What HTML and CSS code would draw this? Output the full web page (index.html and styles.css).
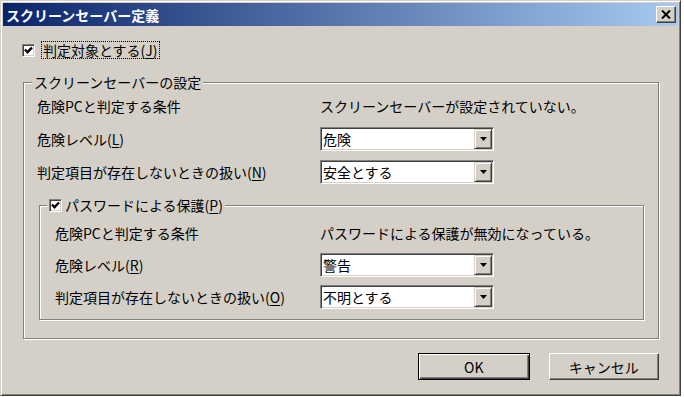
FILE: index.html
```html
<!DOCTYPE html>
<html lang="ja">
<head>
    <meta charset="UTF-8">
    <title>スクリーンセーバー定義</title>
    <link rel="stylesheet" href="styles.css">
</head>
<body>

    <!-- dialog start -->
    <div class="window">
        <div class="titlebar">
            <span>スクリーンセーバー定義</span>
            <div class="close">
                <svg width="10" height="9" viewBox="0 0 10 9"><path d="M1 0.5 L9 8.5 M9 0.5 L1 8.5" stroke="#000" stroke-width="2"/></svg>
            </div>
        </div>

        <div class="content">
            <div class="check-row">
                <span class="box">
                    <svg width="9" height="9" viewBox="0 0 9 9"><polyline points="1,3.5 3.5,6.2 8,1.5" fill="none" stroke="#000" stroke-width="2.4"/></svg>
                </span>
                <span class="focus">判定対象とする(<u>J</u>)</span>
            </div>

            <fieldset class="group outer">
                <legend>スクリーンセーバーの設定</legend>
                <div class="rows">
                    <div class="row">
                        <span class="lbl">危険PCと判定する条件</span>
                        <span>スクリーンセーバーが設定されていない。</span>
                    </div>
                    <div class="row">
                        <span class="lbl">危険レベル(<u>L</u>)</span>
                        <div class="combo"><span>危険</span><span class="drop"><svg width="7" height="4" viewBox="0 0 7 4"><polygon points="0,0 7,0 3.5,4" fill="#000"/></svg></span></div>
                    </div>
                    <div class="row">
                        <span class="lbl">判定項目が存在しないときの扱い(<u>N</u>)</span>
                        <div class="combo"><span>安全とする</span><span class="drop"><svg width="7" height="4" viewBox="0 0 7 4"><polygon points="0,0 7,0 3.5,4" fill="#000"/></svg></span></div>
                    </div>

                    <fieldset class="group inner">
                        <legend>
                            <span class="box">
                                <svg width="9" height="9" viewBox="0 0 9 9"><polyline points="1,3.5 3.5,6.2 8,1.5" fill="none" stroke="#000" stroke-width="2.4"/></svg>
                            </span>
                            <span>パスワードによる保護(<u>P</u>)</span>
                        </legend>
                        <div class="rows">
                            <div class="row">
                                <span class="lbl">危険PCと判定する条件</span>
                                <span>パスワードによる保護が無効になっている。</span>
                            </div>
                            <div class="row">
                                <span class="lbl">危険レベル(<u>R</u>)</span>
                                <div class="combo"><span>警告</span><span class="drop"><svg width="7" height="4" viewBox="0 0 7 4"><polygon points="0,0 7,0 3.5,4" fill="#000"/></svg></span></div>
                            </div>
                            <div class="row">
                                <span class="lbl">判定項目が存在しないときの扱い(<u>O</u>)</span>
                                <div class="combo"><span>不明とする</span><span class="drop"><svg width="7" height="4" viewBox="0 0 7 4"><polygon points="0,0 7,0 3.5,4" fill="#000"/></svg></span></div>
                            </div>
                        </div>
                    </fieldset>
                </div>
            </fieldset>

            <div class="buttons">
                <button class="btn default">OK</button>
                <button class="btn cancel">キャンセル</button>
            </div>
        </div>
    </div>
    <!-- dialog end -->

</body>
</html>
```

FILE: styles.css
```css
* {
    padding: 0;
    margin: 0;
    box-sizing: border-box;
}

body {
    background-color: #fff;
    font-family: "Noto Sans CJK JP", "Noto Sans", sans-serif;
    font-size: 14px;
    line-height: 16px;
    color: #000;
}

u {
    text-underline-offset: 2px;
}

.window {
    width: 681px;
    height: 396px;
    background-color: #d4d0c8;
    border: 1px solid;
    border-color: #d4d0c8 #404040 #404040 #d4d0c8;
    box-shadow: inset 1px 1px #fff, inset -1px -1px #808080;
    padding: 2px;
}

.titlebar {
    height: 23px;
    display: flex;
    align-items: center;
    justify-content: space-between;
    padding: 0 2px 0 3px;
    background: linear-gradient(to right, #0a246a, #a6caf0);
    color: #fff;
    font-weight: bold;
}

.close {
    width: 20px;
    height: 17px;
    display: flex;
    align-items: center;
    justify-content: center;
    background-color: #d4d0c8;
    border: 1px solid;
    border-color: #fff #404040 #404040 #fff;
    box-shadow: inset -1px -1px #808080;
}

.content {
    padding: 0 19px;
}

.box {
    width: 13px;
    height: 13px;
    display: flex;
    align-items: center;
    justify-content: center;
    background-color: #fff;
    border: 1px solid;
    border-color: #808080 #fff #fff #808080;
    box-shadow: inset 1px 1px #404040, inset -1px -1px #d4d0c8;
}

.check-row {
    height: 16px;
    margin-top: 16px;
    display: flex;
    align-items: center;
    gap: 7px;

    .focus {
        outline: 1px dotted #000;
        padding: 0 1px;
    }
}

.group {
    border: 1px solid #808080;
    box-shadow: inset 1px 1px #fff, 1px 1px #fff;
    padding: 0;

    legend {
        padding: 0 2px;
        line-height: 16px;
        background-color: #d4d0c8;
    }
}

.outer {
    width: 636px;
    height: 265px;
    margin: 16px 0 0 1px;

    legend {
        margin-left: 8px;
    }

    > .rows {
        padding: 4px 0 0 13px;
        gap: 9px;
    }

    .lbl {
        width: 283px;
    }
}

.inner {
    width: 605px;
    height: 123px;
    margin: 4px 0 0 2px;

    legend {
        margin-left: 7px;
        display: flex;
        align-items: center;
        gap: 3px;
    }

    .rows {
        padding: 8px 0 0 15px;
        gap: 8px;
    }

    .lbl {
        width: 265px;
    }
}

.rows {
    display: flex;
    flex-direction: column;
}

.row {
    height: 24px;
    display: flex;
    align-items: center;
}

.combo {
    width: 174px;
    height: 24px;
    display: flex;
    align-items: center;
    justify-content: space-between;
    padding: 0 0 0 2px;
    background-color: #fff;
    border: 1px solid;
    border-color: #808080 #fff #fff #808080;
    box-shadow: inset 1px 1px #404040, inset -1px -1px #d4d0c8;

    .drop {
        width: 18px;
        height: 20px;
        margin-right: 1px;
        display: flex;
        align-items: center;
        justify-content: center;
        background-color: #d4d0c8;
        border: 1px solid;
        border-color: #d4d0c8 #404040 #404040 #d4d0c8;
        box-shadow: inset 1px 1px #fff, inset -1px -1px #808080;
    }
}

.buttons {
    margin: 14px 0 0 396px;
    display: flex;
    gap: 19px;
}

.btn {
    width: 112px;
    height: 27px;
    font-family: "Noto Sans CJK JP", "Noto Sans", sans-serif;
    font-size: 14px;
    color: #000;
    background-color: #d4d0c8;
    border: 1px solid;
    border-color: #fff #404040 #404040 #fff;
    box-shadow: inset -1px -1px #808080;
}

.default {
    border-color: #000;
    box-shadow: inset 1px 1px #fff, inset -1px -1px #404040, inset -2px -2px #808080;
}

.cancel {
    width: 111px;
}
```
